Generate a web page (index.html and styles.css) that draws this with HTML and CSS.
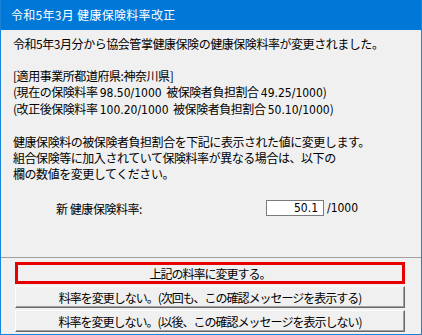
FILE: index.html
```html
<!DOCTYPE html>
<html lang="ja">
<head>
    <meta charset="UTF-8">
    <title>令和5年3月 健康保険料率改正</title>
    <link rel="stylesheet" href="styles.css">
</head>
<body>

    <div class="window">
        <div class="titlebar">令和5年3月 健康保険料率改正</div>

        <div class="message">
            <p>令和5年3月分から協会管掌健康保険の健康保険料率が変更されました。</p>
            <p class="blank"></p>
            <p>[適用事業所都道府県:神奈川県]</p>
            <p>(現在の保険料率 <span class="num">98.50/1000</span>&nbsp; 被保険者負担割合 <span class="num">49.25/1000</span>)</p>
            <p>(改正後保険料率 <span class="num">100.20/1000</span>&nbsp; 被保険者負担割合 <span class="num">50.10/1000</span>)</p>
            <p class="blank"></p>
            <p>健康保険料の被保険者負担割合を下記に表示された値に変更します。</p>
            <p>組合保険等に加入されていて保険料率が異なる場合は、以下の</p>
            <p>欄の数値を変更してください。</p>

            <div class="rate-row">
                <label for="rate">新 健康保険料率:</label>
                <input type="text" id="rate" class="rate-input" value="50.1">
                <span class="num">/1000</span>
            </div>
        </div>

        <div class="actions">
            <button class="btn btn-default">上記の料率に変更する。</button>
            <button class="btn">料率を変更しない。(次回も、この確認メッセージを表示する)</button>
            <button class="btn">料率を変更しない。(以後、この確認メッセージを表示しない)</button>
        </div>
    </div>

</body>
</html>
```

FILE: styles.css
```css
* {
    margin: 0;
    padding: 0;
    box-sizing: border-box;
}

body {
    font-family: "Noto Sans CJK JP", "Noto Sans", sans-serif;
    font-size: 12px;
    color: #000;
    background-color: #f0f0f0;
}

.window {
    width: 422px;
    height: 335px;
    background-color: #f0f0f0;
    border: 1px solid #1883d7;
    border-top: none;
    display: flex;
    flex-direction: column;
}

/* タイトルバー */
.titlebar {
    height: 30px;
    background-color: #0078d7;
    color: #fff;
    line-height: 30px;
    padding-left: 10px;
    letter-spacing: 0.3px;
}

.message {
    padding: 6px 0 0 12px;
    height: 228px;
    border-bottom: 1px solid #a0a0a0;
    letter-spacing: -0.45px;
}

.message p {
    line-height: 16px;
    white-space: nowrap;
}

.blank {
    height: 16px;
}

.num {
    font-family: "Liberation Sans Narrow", "DejaVu Sans Condensed", sans-serif;
    letter-spacing: 0;
}

.rate-row {
    display: flex;
    align-items: center;
    margin-top: 18px;
    padding-left: 43px;
    height: 16px;
}

.rate-row label {
    width: 210px;
}

.rate-input {
    width: 58px;
    height: 16px;
    border: 1px solid #7a7a7a;
    background-color: #fff;
    text-align: right;
    padding-right: 5px;
    font-family: "Liberation Sans Narrow", "DejaVu Sans Condensed", sans-serif;
    font-size: 12px;
    outline: none;
    margin-right: 3px;
}

/* ボタン */
.actions {
    display: flex;
    flex-direction: column;
    gap: 2px;
    padding: 4px 16px 0 14px;
}

.btn {
    height: 22px;
    font-family: "Noto Sans CJK JP", "Noto Sans", sans-serif;
    font-size: 12px;
    letter-spacing: -1px;
    color: #000;
    background-color: #f0f0f0;
    border: 1px solid;
    border-color: #fff #696969 #696969 #fff;
    box-shadow: inset -1px -1px 0 #a0a0a0;
    cursor: pointer;
}

.btn-default {
    border: 3px solid #e60000;
    box-shadow: none;
}
```
